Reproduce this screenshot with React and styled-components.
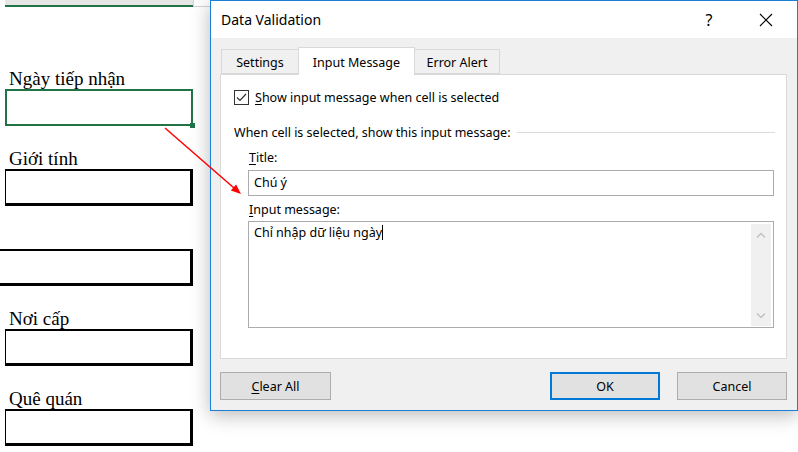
import React from 'react'
import styled, { createGlobalStyle } from 'styled-components'

const GlobalStyle = createGlobalStyle`
  html, body {
    margin: 0;
    padding: 0;
    background: #fff;
  }
  body {
    width: 798px;
    height: 452px;
    overflow: hidden;
    font-family: "Noto Sans", "Open Sans", sans-serif;
    color: #000;
  }
`

const Page = styled.div`
  position: relative;
  display: flex;
  width: 798px;
  height: 452px;
`

// Spreadsheet form behind the dialog
const Sheet = styled.div`
  width: 210px;
  flex-shrink: 0;
`

const TopStrip = styled.div`
  display: flex;
  height: 7px;
`

const HeaderCell = styled.div`
  margin-left: 5px;
  width: 188px;
  height: 5px;
  background: #e6e6e6;
  border-bottom: 2px solid #217346;
`

const HeaderRest = styled.div`
  flex: 1;
  border-left: 1px solid #d4d4d4;
  border-bottom: 1px solid #d4d4d4;
  height: 6px;
`

const Rows = styled.div`
  padding-top: 39px;
`

const Field = styled.div`
  padding-top: 23px;
`

const Label = styled.div`
  height: 20px;
  line-height: 20px;
  padding-left: 9px;
  font-family: "Liberation Serif", "Times New Roman", serif;
  font-size: 19px;
`

const Cell = styled.div`
  position: relative;
  box-sizing: border-box;
  height: 37px;
  margin-left: ${p => (p.$wide ? '0' : '5px')};
  width: ${p => (p.$wide ? '193px' : '188px')};
  border-style: solid;
  border-color: ${p => (p.$active ? '#217346' : '#000')};
  border-width: ${p => (p.$active ? '2px' : p.$wide ? '2px 3px 3px 0' : '2px 3px 3px 1px')};
`

const Handle = styled.div`
  position: absolute;
  right: -4px;
  bottom: -4px;
  width: 5px;
  height: 5px;
  background: #217346;
`

// Dialog
const Dialog = styled.div`
  box-sizing: border-box;
  width: 588px;
  height: 411px;
  display: flex;
  flex-direction: column;
  background: #f0f0f0;
  border: 1px solid #1a7fd6;
  box-shadow: 0 4px 18px rgba(0, 0, 0, 0.28);
  font-size: 12.5px;
`

const TitleBar = styled.div`
  height: 37px;
  display: flex;
  align-items: center;
  background: #fff;
  padding-left: 10px;
`

const TitleText = styled.div`
  flex: 1;
  font-size: 14px;
`

const HelpBtn = styled.div`
  width: 30px;
  text-align: center;
  font-size: 16px;
  margin-right: 27px;
`

const CloseBtn = styled.div`
  width: 30px;
  margin-right: 16px;
  display: flex;
  justify-content: center;
`

const Body = styled.div`
  flex: 1;
  display: flex;
  flex-direction: column;
  padding: 9px 10px 10px 9px;
`

const Tabs = styled.div`
  display: flex;
  align-items: flex-end;
  height: 27px;
  margin-left: 2px;
`

const Tab = styled.div`
  position: relative;
  box-sizing: border-box;
  width: ${p => p.$w}px;
  height: ${p => (p.$active ? '28px' : '25px')};
  margin-bottom: ${p => (p.$active ? '-1px' : '0')};
  margin-left: -1px;
  z-index: ${p => (p.$active ? 1 : 0)};
  display: flex;
  align-items: center;
  justify-content: center;
  padding-top: 2px;
  background: ${p => (p.$active ? '#fff' : '#f0f0f0')};
  border: 1px solid #d9d9d9;
  border-bottom: ${p => (p.$active ? 'none' : '1px solid #d9d9d9')};
  font-size: 12.5px;
`

const Panel = styled.div`
  box-sizing: border-box;
  height: 285px;
  background: #fff;
  border: 1px solid #d9d9d9;
  padding: 15px 11px 0 13px;
  display: flex;
  flex-direction: column;
`

const CheckRow = styled.div`
  display: flex;
  align-items: center;
  height: 15px;
  gap: 6px;
`

const CheckBox = styled.div`
  box-sizing: border-box;
  width: 15px;
  height: 15px;
  border: 1px solid #333;
  display: flex;
  align-items: center;
  justify-content: center;
`

const Key = styled.span`
  text-decoration: underline;
  text-underline-offset: 2px;
`

const SectionRow = styled.div`
  display: flex;
  align-items: center;
  gap: 6px;
  height: 16px;
  margin-top: 19px;
`

const Rule = styled.div`
  flex: 1;
  height: 1px;
  background: #dcdcdc;
`

const FieldLabel = styled.div`
  height: 16px;
  line-height: 16px;
  margin-top: ${p => p.$top}px;
  margin-left: 15px;
`

const TextBox = styled.div`
  box-sizing: border-box;
  height: ${p => p.$h}px;
  margin-top: ${p => p.$top}px;
  margin-left: 14px;
  width: 526px;
  border: 1px solid #ababab;
  background: #fff;
  display: flex;
  align-items: ${p => (p.$multi ? 'flex-start' : 'center')};
`

const TextValue = styled.div`
  flex: 1;
  padding: ${p => (p.$multi ? '3px 0 0 5px' : '0 0 0 5px')};
  line-height: 16px;
`

const Caret = styled.span`
  display: inline-block;
  width: 1px;
  height: 15px;
  background: #000;
  vertical-align: -3px;
`

const ScrollTrack = styled.div`
  width: 20px;
  align-self: stretch;
  margin: 2px 2px 1px 0;
  background: #f0f0f0;
  display: flex;
  flex-direction: column;
  justify-content: space-between;
  align-items: center;
  padding: 8px 0 7px;
`

const ButtonRow = styled.div`
  display: flex;
  margin-top: 13px;
  height: 28px;
`

const Button = styled.div`
  box-sizing: border-box;
  width: ${p => p.$w}px;
  margin-left: ${p => p.$ml || '0'};
  display: flex;
  align-items: center;
  justify-content: center;
  background: #e1e1e1;
  border: ${p => (p.$primary ? '2px solid #0078d7' : '1px solid #adadad')};
  font-size: 12.5px;
`

const Overlay = styled.svg`
  position: absolute;
  left: 0;
  top: 0;
  pointer-events: none;
`

const Chevron = ({ up }) => (
  <svg width="10" height="6" viewBox="0 0 10 6">
    <polyline
      points={up ? '1,5.5 5,1.5 9,5.5' : '1,0.5 5,4.5 9,0.5'}
      fill="none"
      stroke="#c2c2c2"
      strokeWidth="1.5"
    />
  </svg>
)

const fields = [
  { label: 'Ngày tiếp nhận', active: true },
  { label: 'Giới tính' },
  { label: '', wide: true },
  { label: 'Nơi cấp' },
  { label: 'Quê quán' },
]

export default function App() {
  return (
    <Page>
      <GlobalStyle />
      <Sheet>
        <TopStrip>
          <HeaderCell />
          <HeaderRest />
        </TopStrip>
        <Rows>
          {fields.map((f, i) => (
            <Field key={i}>
              <Label>{f.label}</Label>
              <Cell $active={f.active} $wide={f.wide}>
                {f.active && <Handle />}
              </Cell>
            </Field>
          ))}
        </Rows>
      </Sheet>

      <Dialog>
        <TitleBar>
          <TitleText>Data Validation</TitleText>
          <HelpBtn>?</HelpBtn>
          <CloseBtn>
            <svg width="14" height="14" viewBox="0 0 14 14">
              <path d="M1 1 L13 13 M13 1 L1 13" stroke="#000" strokeWidth="1.1" />
            </svg>
          </CloseBtn>
        </TitleBar>
        <Body>
          <Tabs>
            <Tab $w={78}>Settings</Tab>
            <Tab $w={117} $active>Input Message</Tab>
            <Tab $w={86}>Error Alert</Tab>
          </Tabs>
          <Panel>
            <CheckRow>
              <CheckBox>
                <svg width="11" height="9" viewBox="0 0 11 9">
                  <polyline points="1,4.5 4,7.5 10,1" fill="none" stroke="#333" strokeWidth="1.2" />
                </svg>
              </CheckBox>
              <span>
                <Key>S</Key>how input message when cell is selected
              </span>
            </CheckRow>
            <SectionRow>
              <span>When cell is selected, show this input message:</span>
              <Rule />
            </SectionRow>
            <FieldLabel $top={10}>
              <Key>T</Key>itle:
            </FieldLabel>
            <TextBox $h={26} $top={4}>
              <TextValue>Chú ý</TextValue>
            </TextBox>
            <FieldLabel $top={6}>
              <Key>I</Key>nput message:
            </FieldLabel>
            <TextBox $h={107} $top={3} $multi>
              <TextValue $multi>
                Chỉ nhập dữ liệu ngày<Caret />
              </TextValue>
              <ScrollTrack>
                <Chevron up />
                <Chevron />
              </ScrollTrack>
            </TextBox>
          </Panel>
          <ButtonRow>
            <Button $w={111}>
              <span>
                <Key>C</Key>lear All
              </span>
            </Button>
            <Button $w={110} $ml="auto" $primary>OK</Button>
            <Button $w={110} $ml="17px">Cancel</Button>
          </ButtonRow>
        </Body>
      </Dialog>

      <Overlay width="798" height="452" viewBox="0 0 798 452">
        <line x1="165" y1="128" x2="234" y2="188" stroke="#ff0000" strokeWidth="1.5" />
        <polygon points="241,194 230.8,190.5 236.1,184.4" fill="#ff0000" />
      </Overlay>
    </Page>
  )
}
